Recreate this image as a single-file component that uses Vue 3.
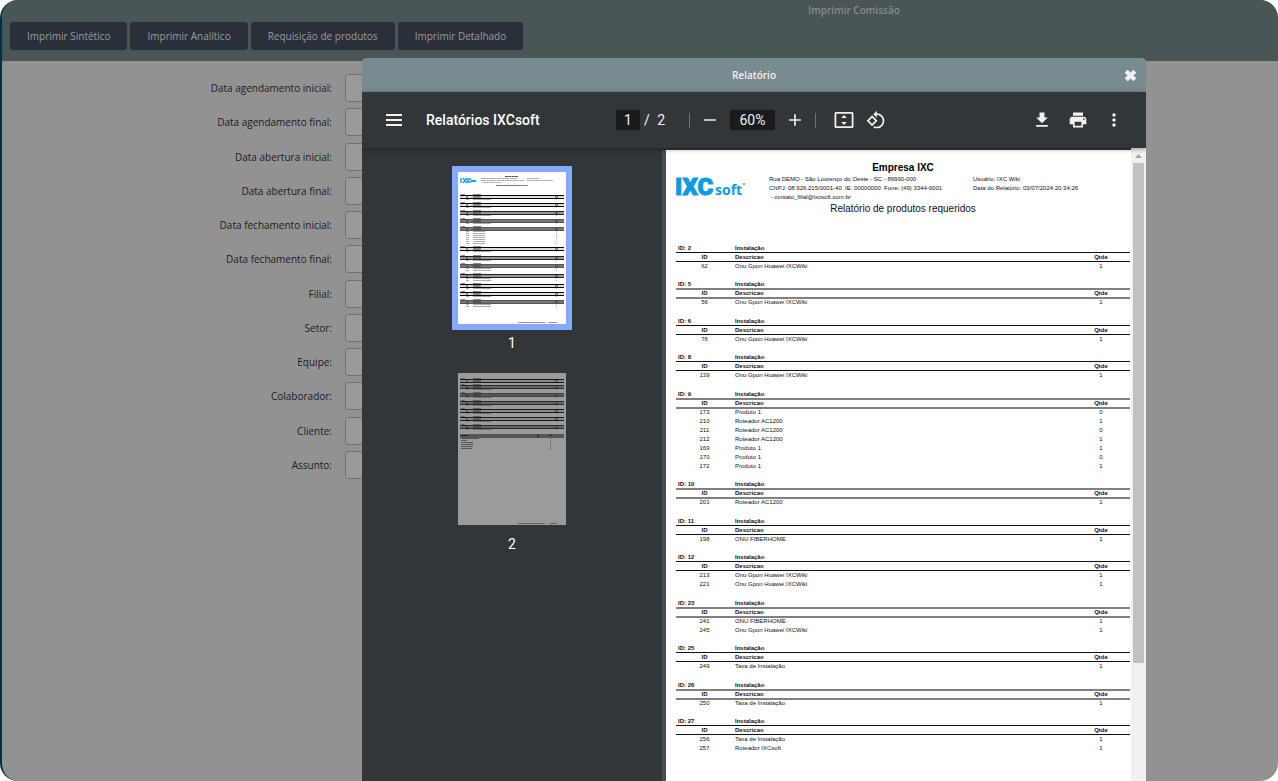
<script setup>
const actions = ['Imprimir Sintético', 'Imprimir Analítico', 'Requisição de produtos', 'Imprimir Detalhado']

const fields = [
  'Data agendamento inicial', 'Data agendamento final', 'Data abertura inicial', 'Data abertura final',
  'Data fechamento inicial', 'Data fechamento final', 'Filial', 'Setor', 'Equipe', 'Colaborador', 'Cliente', 'Assunto',
]

const onu = 'Onu Gpon Huawei IXCWiki'
const groups = [
  { id: 2, items: [[62, onu, 1]] },
  { id: 5, soft: true, items: [[56, onu, 1]] },
  { id: 6, items: [[76, onu, 1]] },
  { id: 8, items: [[139, onu, 1]] },
  { id: 9, soft: true, items: [[173, 'Produto 1', 0], [210, 'Roteador AC1200', 1], [211, 'Roteador AC1200', 0], [212, 'Roteador AC1200', 1], [169, 'Produto 1', 1], [170, 'Produto 1', 0], [172, 'Produto 1', 1]] },
  { id: 10, soft: true, items: [[201, 'Roteador AC1200', 1]] },
  { id: 11, items: [[198, 'ONU FIBERHOME', 1]] },
  { id: 12, items: [[213, onu, 1], [221, onu, 1]] },
  { id: 23, soft: true, items: [[241, 'ONU FIBERHOME', 1], [245, onu, 1]] },
  { id: 25, items: [[249, 'Taxa de Instalação', 1]] },
  { id: 26, soft: true, items: [[250, 'Taxa de Instalação', 1]] },
  { id: 27, items: [[256, 'Taxa de Instalação', 1], [257, 'Roteador IXCsoft', 1]] },
]

// Thumbnail bands: [top, shade, number of item rows]
const thumbs = [
  {
    n: 1, active: true, header: true, summary: 0,
    bands: [[23, 0, 1], [31, 0, 1], [39, 1, 1], [47, 2, 1], [55, 2, 7], [75, 0, 1], [84, 1, 1], [92, 2, 2], [102, 1, 2], [112, 0, 1], [120, 0, 1], [128, 2, 2]],
  },
  {
    n: 2, active: false, header: false, summary: 61,
    bands: [[6, 0, 0], [12, 1, 1], [20, 2, 1], [28, 1, 1], [36, 0, 1], [44, 0, 1], [52, 1, 1]],
  },
]
const shades = ['#dddddd', '#999999', '#777777']
const inks = ['#000000', '#222222', '#555555']
</script>

<template>
  <main class="app">
    <header class="top">
      <h1>Imprimir Comissão</h1>
      <nav class="actions">
        <button v-for="a in actions" :key="a" type="button">{{ a }}</button>
      </nav>
    </header>

    <form class="form">
      <div v-for="(f, i) in fields" :key="f" class="field">
        <label :for="'f' + i">{{ f }}:</label>
        <input :id="'f' + i" type="text">
      </div>
    </form>

    <section class="modal" role="dialog" aria-labelledby="modal-title">
      <header class="modal-head">
        <h2 id="modal-title">Relatório</h2>
        <button type="button" class="close" aria-label="Fechar">
          <svg viewBox="0 0 12 12" width="13" height="13"><path d="M2 2l8 8M10 2l-8 8" stroke="currentColor" stroke-width="4" /></svg>
        </button>
      </header>

      <div class="toolbar">
        <div class="start">
          <button type="button" class="icon" aria-label="Menu">
            <svg viewBox="0 0 20 20"><path d="M2 4h16v2H2zM2 9h16v2H2zM2 14h16v2H2z" /></svg>
          </button>
          <span class="doc">Relatórios IXCsoft</span>
        </div>
        <div class="center">
          <input class="box page-no" type="text" value="1" aria-label="Página">
          <span class="total"><span>/</span><span>2</span></span>
          <i class="rule first" />
          <button type="button" class="icon" aria-label="Reduzir">
            <svg viewBox="0 0 24 24"><path d="M19 13H5v-2h14v2z" /></svg>
          </button>
          <input class="box zoom" type="text" value="60%" aria-label="Zoom">
          <button type="button" class="icon" aria-label="Ampliar">
            <svg viewBox="0 0 24 24"><path d="M19 13h-6v6h-2v-6H5v-2h6V5h2v6h6v2z" /></svg>
          </button>
          <i class="rule last" />
          <button type="button" class="icon" aria-label="Ajustar à página">
            <svg viewBox="0 0 20 20"><path fill-rule="evenodd" d="M2 2h16a1.500 1.500 0 0 1 1.500 1.500v13a1.500 1.500 0 0 1-1.500 1.500H2A1.500 1.500 0 0 1 .5 16.500v-13A1.500 1.500 0 0 1 2 2zm.3 1.800v12.400h15.400V3.800zM10 5l2.700 3H7.300zM10 15l-2.700-3h5.400z" /></svg>
          </button>
          <button type="button" class="icon" aria-label="Girar">
            <svg viewBox="0 0 24 24"><path d="M7.340 6.410L.86 12.900l6.490 6.480 6.490-6.480-6.500-6.490zM3.690 12.900l3.660-3.660L11 12.900l-3.660 3.660-3.650-3.660zm15.670-6.260C17.610 4.880 15.300 4 13 4V.76L8.760 5 13 9.240V6c1.790 0 3.580.68 4.950 2.050 2.730 2.730 2.730 7.170 0 9.900C16.580 19.320 14.790 20 13 20c-.97 0-1.940-.21-2.840-.61l-1.490 1.490C10.020 21.620 11.510 22 13 22c2.300 0 4.610-.88 6.360-2.640 3.520-3.510 3.520-9.210 0-12.720z" /></svg>
          </button>
        </div>
        <div class="end">
          <button type="button" class="icon" aria-label="Baixar">
            <svg viewBox="0 0 24 24"><path d="M19 9h-4V3H9v6H5l7 7 7-7zM5 18v2h14v-2H5z" /></svg>
          </button>
          <button type="button" class="icon" aria-label="Imprimir">
            <svg viewBox="0 0 24 24"><path d="M19 8H5c-1.660 0-3 1.340-3 3v6h4v4h12v-4h4v-6c0-1.660-1.340-3-3-3zm-3 11H8v-5h8v5zm3-7c-.55 0-1-.45-1-1s.45-1 1-1 1 .45 1 1-.45 1-1 1zm-1-9H6v4h12V3z" /></svg>
          </button>
          <button type="button" class="icon" aria-label="Mais opções">
            <svg viewBox="0 0 24 24"><path d="M12 8c1.100 0 2-.9 2-2s-.9-2-2-2-2 .9-2 2 .9 2 2 2zm0 2c-1.100 0-2 .9-2 2s.9 2 2 2 2-.9 2-2-.9-2-2-2zm0 6c-1.100 0-2 .9-2 2s.9 2 2 2 2-.9 2-2-.9-2-2-2z" /></svg>
          </button>
        </div>
      </div>

      <div class="viewer">
        <aside class="thumbs">
          <figure v-for="t in thumbs" :key="t.n" :class="{ active: t.active }">
            <svg viewBox="0 0 108 152" width="108" height="152" aria-hidden="true">
              <rect width="108" height="152" fill="#fff" />
              <g v-if="t.header">
                <path d="M3 6v5M5 6l4 5M9 6l-4 5M13 7h-3v3h3" stroke="#12a5e8" stroke-width="1.500" fill="none" />
                <path d="M13 9h5" stroke="#12a5e8" stroke-width="2" />
                <path d="M47 4.500h13" stroke="#555" stroke-dasharray="3 .3" />
                <path d="M23 6.500h36M69 6.500h12M23 8.500h43M69 8.500h26M25 10.500h18" stroke="#999" stroke-width=".8" stroke-dasharray="5 .4 2 .4" />
                <path d="M38 13.500h32" stroke="#777" stroke-dasharray="6 .4 3 .4" />
              </g>
              <g v-for="b in t.bands" :key="b[0]">
                <path :d="`M3 ${b[0] - .5}h4M15 ${b[0] - .5}h8`" stroke="#888" />
                <rect x="2" :y="b[0]" width="104" height="3" :fill="shades[b[1]]" />
                <path :d="`M2 ${b[0] + .5}h104M2 ${b[0] + 3.5}h104`" :stroke="inks[b[1]]" />
                <path :d="`M8 ${b[0] + 2}h2M15 ${b[0] + 2}h8M97 ${b[0] + 2}h3`" stroke="#333" />
                <path v-for="r in b[2]" :key="r" :d="`M8 ${b[0] + 2.5 + r * 2}h3M15 ${b[0] + 2.5 + r * 2}h${b[2] > 2 ? 12 : 18}M98 ${b[0] + 2.5 + r * 2}h1`" stroke="#888" stroke-width=".7" />
              </g>
              <g v-if="t.summary">
                <rect x="2" :y="t.summary" width="104" height="4" fill="#777" />
                <path :d="`M3 ${t.summary + 1.5}h7M91 ${t.summary + 1.5}h3M80 ${t.summary}v4`" stroke="#111" />
                <path d="M3 65.500h18M3 67.500h6M3 69.500h12M3 71.500h12M3 73.500h12M3 75.500h11M92 65.500h1M92 67.500h1M92 69.500h1M92 71.500h1M92 73.500h1M92 75.500h1" stroke="#555" stroke-width=".8" />
              </g>
              <path d="M60 150.500h27M91 150.500h8" stroke="#777" stroke-width=".8" />
            </svg>
            <figcaption>{{ t.n }}</figcaption>
          </figure>
        </aside>

        <article class="page">
          <header class="report-head">
            <h3>Empresa IXC</h3>
            <div class="company">
              <svg class="logo" viewBox="0 0 72 24" width="72" height="24" role="img" aria-label="IXCsoft">
                <text class="mark" x="-1" y="20">IXC</text>
                <text class="word" x="39" y="20">soft</text>
                <circle cx="68" cy="9" r="1" />
              </svg>
              <address>
                <div>Rua DEMO - São Lourenço do Oeste - SC - 89990-000</div>
                <div>CNPJ: 08.926.215/0001-40&nbsp; IE: 00000000&nbsp; Fone: (49) 3344-6001</div>
                <div>&nbsp;- contato_filial@ixcsoft.com.br</div>
              </address>
              <div>
                <div>Usuário: IXC Wiki</div>
                <div>Data do Relatório: 03/07/2024 20:34:26</div>
              </div>
            </div>
            <p>Relatório de produtos requeridos</p>
          </header>

          <table v-for="g in groups" :key="g.id" :class="{ soft: g.soft }">
            <thead>
              <tr><th class="gid">ID: {{ g.id }}</th><th class="desc">Instalação</th><th class="qty" /></tr>
              <tr class="lined"><th>ID</th><th class="desc">Descricao</th><th>Qtde</th></tr>
            </thead>
            <tbody>
              <tr v-for="(it, i) in g.items" :key="it[0]" :class="{ lined: i === 0 }">
                <td>{{ it[0] }}</td><td class="desc">{{ it[1] }}</td><td>{{ it[2] }}</td>
              </tr>
            </tbody>
          </table>
        </article>

        <div class="scroll" aria-hidden="true">
          <svg viewBox="0 0 15 15" width="15" height="15"><path d="M4 10h7L7.500 6z" fill="#a3a3a3" /></svg>
          <div class="thumb" />
        </div>
      </div>
    </section>
  </main>
</template>

<style>
body { background: #fff; }
</style>

<style scoped>
* { box-sizing: border-box; }
h1, h2, h3, p, figure { margin: 0; }
button, input { font: inherit; color: inherit; border: 0; padding: 0; margin: 0; background: none; }

.app {
  position: relative;
  min-height: 100vh;
  border-left: 2px solid #002f47;
  border-radius: 18px;
  overflow: hidden;
  background: #929292;
  font-family: "Open Sans", "Noto Sans", sans-serif;
  font-size: 10px;
}
.top { height: 61px; background: #4a5556; }
h1 {
  padding-left: 428px;
  height: 22px;
  line-height: 21px;
  font-size: 10px;
  font-weight: 600;
  text-align: center;
  color: #868b8b;
}
.actions { display: flex; gap: 3px; padding-left: 8px; }
.actions button {
  height: 28px;
  padding: 0 17px;
  border-radius: 3px;
  background: #2a303a;
  color: #999b9d;
  font-size: 10px;
  font-weight: 500;
}

.form { padding-top: 13px; }
.field { display: flex; align-items: flex-start; height: 34px; }
.field:nth-child(4n + 2) { height: 35px; }
.field label { width: 330px; line-height: 28px; text-align: right; color: #1c1c1c; }
.field input {
  width: 400px;
  height: 28px;
  margin-left: 13px;
  border: 1px solid #707070;
  border-radius: 3px;
  background: #999;
}

.modal {
  position: absolute;
  top: 58px;
  right: 132px;
  bottom: 0;
  left: 360px;
  display: flex;
  flex-direction: column;
  overflow: hidden;
  border-radius: 4px 4px 0 0;
  background: #323639;
}
.modal-head {
  flex: none;
  display: grid;
  grid-template-columns: 32px 1fr 32px;
  align-items: center;
  height: 34px;
  background: #788b91;
  color: #f0f0f0;
}
h2 { grid-column: 2; text-align: center; font-size: 10px; font-weight: 600; }
.close { display: grid; place-items: center; height: 34px; }

.toolbar {
  position: relative;
  z-index: 1;
  flex: none;
  display: flex;
  align-items: center;
  height: 56px;
  padding: 0 16px;
  background: #323639;
  box-shadow: 0 1px 5px rgba(0, 0, 0, .4);
  color: #f1f1f1;
  font-family: Roboto, sans-serif;
  font-size: 14px;
}
.start, .end { display: flex; flex: 1; align-items: center; }
.end { justify-content: flex-end; gap: 4px; }
.doc { margin-left: 16px; font-weight: 500; white-space: nowrap; color: #fff; }
.center { display: flex; align-items: center; }
.icon { display: grid; place-items: center; width: 32px; height: 32px; }
.icon svg { width: 20px; height: 20px; fill: #f1f1f1; }
.box { height: 20px; background: #191b1c; text-align: center; color: #f1f1f1; }
.page-no { width: 24px; }
.zoom { width: 45px; margin: 0 4px; }
.total { display: flex; justify-content: space-between; width: 25px; padding-left: 4px; }
.rule { width: 1px; height: 15px; background: #6f7274; }
.first { margin: 0 4px 0 24px; }
.last { margin: 0 12px 0 4px; }

.viewer { flex: 1; display: flex; min-height: 0; }
.thumbs {
  flex: none;
  display: flex;
  flex-direction: column;
  align-items: center;
  width: 300px;
  padding-top: 18px;
}
figure { height: 201px; padding: 6px; }
figure svg { display: block; opacity: .5; }
figure.active svg { opacity: 1; outline: 6px solid #84a9f8; }
figcaption {
  padding-top: 8px;
  line-height: 22px;
  text-align: center;
  font-family: Roboto, sans-serif;
  font-size: 14px;
  color: #fff;
}

.page {
  flex: 1;
  min-width: 0;
  margin-top: 2px;
  margin-left: 4px;
  padding: 12px 1px 0 10px;
  box-shadow: -4px 0 0 #494d50;
  background: #fff;
  color: #111;
  font-family: "Liberation Sans", sans-serif;
  font-size: 6px;
  line-height: 9px;
  overflow: hidden;
}
.report-head { height: 81px; }
h3 { font-size: 10px; line-height: 12px; text-align: center; font-weight: 700; color: #000; }
.report-head p { font-size: 10px; line-height: 13px; text-align: center; }
.company { display: grid; grid-template-columns: 93px 204px 1fr; height: 28px; padding-top: 1px; white-space: nowrap; }
.logo { overflow: visible; fill: #0b9be3; }
.mark { font-family: Roboto, sans-serif; font-size: 24px; font-weight: 900; stroke: #0b9be3; stroke-width: 1px; }
.word { font-family: "Open Sans", sans-serif; font-size: 14px; font-weight: 700; }
address { font-style: normal; }

table { width: 100%; table-layout: fixed; border-collapse: separate; border-spacing: 0; margin-bottom: 9px; }
table:nth-of-type(even) { margin-bottom: 10px; }
th, td { height: 9px; padding: 1px 0 0; line-height: 8px; text-align: center; }
.gid { width: 57px; padding-left: 2px; text-align: left; }
.qty { width: 58px; }
.desc { padding-left: 2px; text-align: left; }
.lined > * { padding-top: 0; border-top: 1px solid #111; }
.soft .lined > * { border-top: 2px solid #808080; line-height: 7px; }

.scroll { flex: none; width: 15px; background: #f1f1f1; }
.scroll svg { display: block; }
.thumb { height: 500px; margin: 0 2px; background: #c1c1c1; }
</style>
